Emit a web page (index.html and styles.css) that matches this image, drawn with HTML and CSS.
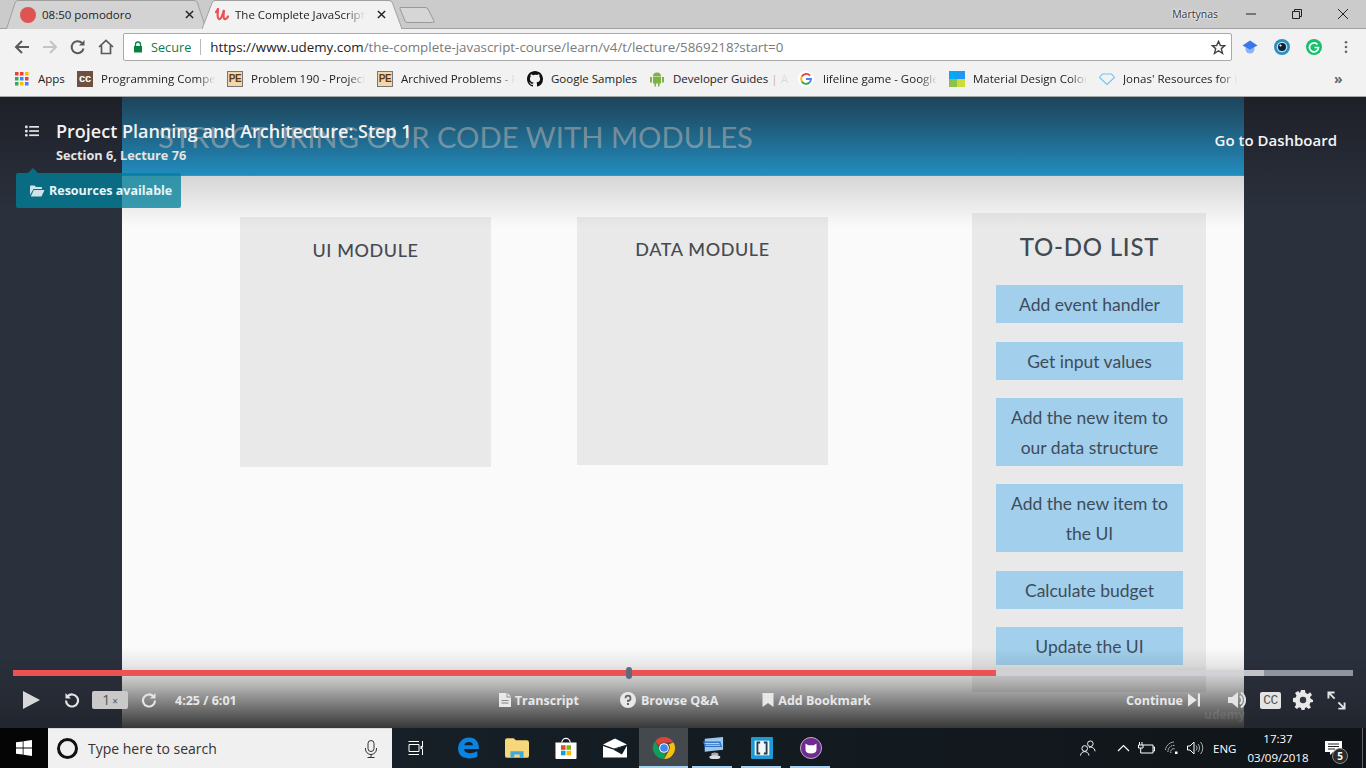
FILE: index.html
```html
<!DOCTYPE html>
<html lang="en">
<head>
<meta charset="utf-8">
<title>The Complete JavaScript Course</title>
<link rel="stylesheet" href="styles.css">
</head>
<body>
<div class="screen">
  <header class="chrome">
    <div class="tabstrip">
      <div class="tab tab-bg">
        <svg class="tab-shape" viewBox="0 0 200 29" preserveAspectRatio="none"><path d="M0.5 29 L9 3 Q9.8 0.5 12 0.5 H188 Q190.5 0.5 191.5 3 L200 29" fill="#d3d3d3" stroke="#a0a0a0"/></svg>
        <span class="fav-dot"></span>
        <span class="tab-title">08:50 pomodoro</span>
        <svg class="tab-x" viewBox="0 0 10 10"><path d="M1 1L9 9M9 1L1 9" stroke="#222" stroke-width="1.6"/></svg>
      </div>
      <div class="tab tab-on">
        <svg class="tab-shape" viewBox="0 0 200 29" preserveAspectRatio="none"><path d="M0 29 L10 3 Q11 0.5 13 0.5 H187 Q189.5 0.5 190.5 3 L200 29" fill="#f2f2f2" stroke="#a0a0a0"/></svg>
        <svg class="fav-u" viewBox="0 0 14 13"><path d="M1 4L3 1M3 1C3 5 1.5 10 4 11C6.5 12 7.5 6 9 2C8.5 6 8 10 9.5 11C10.5 11.5 12 10.5 13 8.500" fill="none" stroke="#ec5252" stroke-width="2.200" stroke-linecap="round"/></svg>
        <span class="tab-title tab-fade">The Complete JavaScript Course</span>
        <svg class="tab-x" viewBox="0 0 10 10"><path d="M1 1L9 9M9 1L1 9" stroke="#222" stroke-width="1.6"/></svg>
      </div>
      <svg class="newtab" viewBox="0 0 36 18"><path d="M1 1.500H26Q28 1.500 29 3L35 15Q35.500 16.500 33.500 16.500H8Q6.500 16.500 6 15L1 2.500Q0.800 1.500 1 1.500Z" fill="#d6d6d6" stroke="#999"/></svg>
      <div class="winctl">
        <span class="user">Martynas</span>
        <svg class="win-ic min" viewBox="0 0 12 12"><path d="M1 6H11" stroke="#222" stroke-width="1"/></svg>
        <svg class="win-ic res" viewBox="0 0 12 12"><path d="M1.500 3.500H8.500V10.500H1.500ZM3.500 3.500V1.500H10.500V8.500H8.500" fill="none" stroke="#222"/></svg>
        <svg class="win-ic cls" viewBox="0 0 12 12"><path d="M1 1L11 11M11 1L1 11" stroke="#222"/></svg>
      </div>
    </div>
    <div class="toolbar">
      <svg class="nav" viewBox="0 0 16 16"><path d="M15 8H2M8 2L2 8L8 14" fill="none" stroke="#5a5a5a" stroke-width="2"/></svg>
      <svg class="nav" viewBox="0 0 16 16"><path d="M1 8H14M8 2L14 8L8 14" fill="none" stroke="#c4c4c4" stroke-width="2"/></svg>
      <svg class="nav" viewBox="0 0 16 16"><path d="M13.500 9.500A6 6 0 1 1 12 4" fill="none" stroke="#5a5a5a" stroke-width="2"/><path d="M14.500 1V6.500H9Z" fill="#5a5a5a"/></svg>
      <svg class="nav" viewBox="0 0 16 16"><path d="M1 8L8 1.500L15 8M3.500 6.500V14.500H12.500V6.500" fill="none" stroke="#5a5a5a" stroke-width="1.700"/></svg>
      <div class="omnibox">
        <svg class="lock" viewBox="0 0 10 12"><path d="M2.500 5V3.500A2.500 2.500 0 0 1 7.500 3.500V5" fill="none" stroke="#0b8043" stroke-width="1.300"/><rect x="1" y="5" width="8" height="6.500" fill="#0b8043"/></svg>
        <span class="secure">Secure</span>
        <span class="omni-div"></span>
        <span class="url"><span class="url-host">https://www.udemy.com</span>/the-complete-javascript-course/learn/v4/t/lecture/5869218?start=0</span>
        <svg class="star" viewBox="0 0 16 16"><path d="M8 1.500L10 6H14.800L11 9.200L12.300 14.300L8 11.500L3.700 14.300L5 9.200L1.200 6H6Z" fill="none" stroke="#444" stroke-width="1.500"/></svg>
      </div>
      <svg class="ext ext-1" viewBox="0 0 16 16"><circle cx="8" cy="10" r="4.500" fill="#8ab4f8"/><path d="M8 1.500L15.500 6.500L8 10.500L0.500 6.500Z" fill="#3b78e7"/></svg>
      <svg class="ext" viewBox="0 0 16 16"><circle cx="8" cy="8" r="8" fill="#2b8fc2"/><circle cx="8" cy="8" r="5.300" fill="#bfe3f2"/><circle cx="8" cy="8" r="4" fill="#0d2233"/><circle cx="6.500" cy="6.500" r="1.100" fill="#fff"/></svg>
      <svg class="ext" viewBox="0 0 16 16"><circle cx="8" cy="8" r="8" fill="#15c26b"/><path d="M11.500 5.500A4.500 4.500 0 1 0 12.500 8.500H8.500" fill="none" stroke="#fff" stroke-width="1.700"/></svg>
      <svg class="dots" viewBox="0 0 4 16"><circle cx="2" cy="2.500" r="1.500" fill="#666"/><circle cx="2" cy="8" r="1.500" fill="#666"/><circle cx="2" cy="13.500" r="1.500" fill="#666"/></svg>
    </div>
    <nav class="bookmarks">
      <div class="bm bm-apps">
        <svg class="bm-ic" viewBox="0 0 14 14"><g><rect x="0" y="0" width="3.500" height="3.500" fill="#ea4335"/><rect x="5" y="0" width="3.500" height="3.500" fill="#ea4335"/><rect x="10" y="0" width="3.500" height="3.500" fill="#fbbc05"/><rect x="0" y="5" width="3.500" height="3.500" fill="#34a853"/><rect x="5" y="5" width="3.500" height="3.500" fill="#4285f4"/><rect x="10" y="5" width="3.500" height="3.500" fill="#ea4335"/><rect x="0" y="10" width="3.500" height="3.500" fill="#34a853"/><rect x="5" y="10" width="3.500" height="3.500" fill="#fbbc05"/><rect x="10" y="10" width="3.500" height="3.500" fill="#4285f4"/></g></svg>
        <span>Apps</span>
      </div>
      <div class="bm"><span class="badge-cc">cc</span><span class="bm-t">Programming Competitions</span></div>
      <div class="bm"><span class="badge-pe">PE</span><span class="bm-t">Problem 190 - Project Euler</span></div>
      <div class="bm"><span class="badge-pe">PE</span><span class="bm-t">Archived Problems - Project</span></div>
      <div class="bm bm-gh">
        <svg class="bm-ic" viewBox="0 0 16 16"><path d="M8 0C3.580 0 0 3.580 0 8c0 3.540 2.290 6.530 5.470 7.590.4.070.55-.17.55-.38v-1.340c-2.230.48-2.700-1.070-2.700-1.070-.36-.92-.89-1.170-.89-1.170-.73-.5.050-.49.050-.49.800.060 1.230.830 1.230.830.710 1.220 1.870.870 2.330.660.070-.520.280-.870.510-1.070-1.780-.2-3.640-.890-3.640-3.950 0-.870.310-1.590.820-2.150-.080-.2-.360-1.020.080-2.120 0 0 .670-.210 2.200.820A7.600 7.600 0 0 1 8 3.850c.680 0 1.360.090 2 .270 1.530-1.040 2.200-.820 2.200-.820.440 1.100.160 1.920.080 2.120.510.560.820 1.270.820 2.150 0 3.070-1.870 3.750-3.650 3.950.290.250.540.730.540 1.480v2.200c0 .210.150.460.550.380A8 8 0 0 0 16 8c0-4.420-3.580-8-8-8z" fill="#111"/></svg>
        <span>Google Samples</span>
      </div>
      <div class="bm bm-an">
        <svg class="bm-ic" viewBox="0 0 16 16"><path d="M4 5.500A4 4 0 0 1 12 5.500ZM4 6H12V12.500H10.500V15.500H9V12.500H7V15.500H5.500V12.500H4ZM1 6H3V11.500H1ZM13 6H15V11.500H13Z" fill="#7cb342"/></svg>
        <span>Developer Guides <span class="bm-sep">|</span> <span class="bm-fadeend">A</span></span>
      </div>
      <div class="bm bm-g">
        <svg class="bm-ic" viewBox="0 0 16 16"><circle cx="8" cy="8" r="8" fill="#fff"/><path d="M12 4.700A5 5 0 0 0 3.800 5.500" fill="none" stroke="#ea4335" stroke-width="1.900"/><path d="M3.800 5.500A5 5 0 0 0 3.800 10.500" fill="none" stroke="#fbbc05" stroke-width="1.900"/><path d="M3.800 10.500A5 5 0 0 0 11.500 11.500" fill="none" stroke="#34a853" stroke-width="1.900"/><path d="M8 8H13A5 5 0 0 1 11.500 11.500" fill="none" stroke="#4285f4" stroke-width="1.900"/></svg>
        <span class="bm-t">lifeline game - Google Search</span>
      </div>
      <div class="bm">
        <svg class="bm-ic" viewBox="0 0 16 16"><rect width="8" height="8" fill="#03a9f4"/><rect x="8" width="8" height="8" fill="#2196f3"/><rect y="8" width="8" height="8" fill="#8bc34a"/><rect x="8" y="8" width="8" height="8" fill="#cddc39"/></svg>
        <span class="bm-t">Material Design Colors</span>
      </div>
      <div class="bm">
        <svg class="bm-ic" viewBox="0 0 16 16"><path d="M3.500 3H12.500L15.500 6.500L8 13.500L0.500 6.500Z" fill="none" stroke="#6fc3ec" stroke-width="1.100"/></svg>
        <span class="bm-t">Jonas' Resources for Everyone</span>
      </div>
      <span class="bm-more">»</span>
    </nav>
  </header>

  <main class="player">
    <section class="slide">
      <div class="slide-bar"><h2 class="slide-title">STRUCTURING OUR CODE WITH MODULES</h2></div>
      <div class="slide-body">
        <div class="module"><h3 class="module-name">UI MODULE</h3></div>
        <div class="module module-data"><h3 class="module-name">DATA MODULE</h3></div>
        <div class="todo">
          <h3 class="todo-title">TO-DO LIST</h3>
          <div class="todo-item">Add event handler</div>
          <div class="todo-item">Get input values</div>
          <div class="todo-item">Add the new item to our data structure</div>
          <div class="todo-item">Add the new item to the UI</div>
          <div class="todo-item">Calculate budget</div>
          <div class="todo-item">Update the UI</div>
        </div>
      </div>
    </section>

    <div class="lecture-head">
      <svg class="list-ic" viewBox="0 0 14 12"><g fill="#e4e4e4"><rect x="0" y="0.500" width="2.700" height="2.700" rx="1"/><rect x="0" y="4.700" width="2.700" height="2.700" rx="1"/><rect x="0" y="8.900" width="2.700" height="2.700" rx="1"/><rect x="4.200" y="1" width="9.800" height="1.700"/><rect x="4.200" y="5.200" width="9.800" height="1.700"/><rect x="4.200" y="9.400" width="9.800" height="1.700"/></g></svg>
      <div>
        <div class="lecture-title">Project Planning and Architecture: Step 1</div>
        <div class="lecture-sub">Section 6, Lecture 76</div>
      </div>
    </div>
    <a class="resources">
      <svg class="folder" viewBox="0 0 15 12"><path d="M0 10V1.500Q0 .500 1 .500H4.500L6 2H11Q12 2 12 3V4H3.500L0 10ZM3.800 5H14.500L11.500 11.500H.8Z" fill="#cfe3e8"/></svg>
      Resources available
    </a>
    <a class="dashboard">Go to Dashboard</a>
    <span class="watermark">udemy</span>

    <div class="controls">
      <div class="progress">
        <div class="prog-buffer"></div>
        <div class="prog-played"></div>
        <div class="prog-handle"></div>
      </div>
      <div class="ctl-row">
        <div class="ctl-left">
          <svg class="play" viewBox="0 0 17 18"><path d="M0 0L17 9L0 18Z" fill="#d8d8d8"/></svg>
          <svg class="seek" viewBox="0 0 16 16"><path d="M3.500 4.500A6 6 0 1 1 2 8.500" fill="none" stroke="#e4e4e4" stroke-width="2.200"/><path d="M1.500 1V6.500H7Z" fill="#e4e4e4"/></svg>
          <span class="speed">1<small class="speed-x">×</small></span>
          <svg class="seek" viewBox="0 0 16 16"><path d="M12.500 4.500A6 6 0 1 0 14 8.500" fill="none" stroke="#e4e4e4" stroke-width="2.200"/><path d="M14.500 1V6.500H9Z" fill="#e4e4e4"/></svg>
          <span class="time">4:25 / 6:01</span>
        </div>
        <div class="ctl-center">
          <span class="ctl-link">
            <svg class="ctl-ic" viewBox="0 0 12 14"><path d="M0 0H7.500V4.500H12V14H0ZM8.500 0L12 3.500H8.500ZM2.500 7H9.500V8H2.500ZM2.500 9.500H9.500V10.500H2.500Z" fill-rule="evenodd" fill="#e8e8e8"/></svg>Transcript</span>
          <span class="ctl-link link-qa">
            <svg class="ctl-ic ic-q" viewBox="0 0 16 16"><circle cx="8" cy="8" r="8" fill="#e8e8e8"/><path d="M5.500 6.200A2.500 2.500 0 1 1 8 8.700V10" fill="none" stroke="#666" stroke-width="1.800"/><rect x="7" y="11" width="2" height="2" fill="#666"/></svg>Browse Q&amp;A</span>
          <span class="ctl-link link-bk">
            <svg class="ctl-ic" viewBox="0 0 11 14"><path d="M0 0H11V14L5.500 10L0 14Z" fill="#e8e8e8"/></svg>Add Bookmark</span>
        </div>
        <div class="ctl-right">
          <span class="ctl-link link-cont">Continue
            <svg class="ctl-ic" viewBox="0 0 11 12"><path d="M0 0L8 6L0 12ZM9 0H11V12H9Z" fill="#e8e8e8"/></svg></span>
          <svg class="vol" viewBox="0 0 20 18"><path d="M0 6H4L10 1V17L4 12H0Z" fill="#e4e4e4"/><path d="M12 5A5 5 0 0 1 12 13M13 1.500A9 9 0 0 1 13 16.500" fill="none" stroke="#e4e4e4" stroke-width="2"/></svg>
          <span class="cc">CC</span>
          <svg class="gear" viewBox="0 0 20 20"><path d="M8 0H12L12.500 3L14.800 4L17.200 2.300L19 5L17 7L17.500 8.500L20 10V12L17.300 12.500L16.500 15L18 17.500L15.500 19L13.500 17.300L12 18L11.500 20H8.500L8 18L6 17.300L4 19L1.500 17L3 15L2.500 12.500L0 12V8L2.800 7.500L3.500 5.500L2 3L5 1L7 3Z" fill="#e8e8e8"/><circle cx="10" cy="10" r="3.200" fill="#33373f"/></svg>
          <svg class="expand" viewBox="0 0 20 20"><path d="M1.500 8V1.500H8M2 2L8 8M18.500 12V18.500H12M18 18L12 12" fill="none" stroke="#e4e4e4" stroke-width="2"/></svg>
        </div>
      </div>
    </div>
  </main>

  <footer class="taskbar">
    <div class="start"><svg class="win-logo" viewBox="0 0 16 16"><path d="M0 2.300L6.700 1.400V7.600H0ZM7.500 1.200L16 0V7.600H7.500ZM0 8.400H6.700V14.600L0 13.700ZM7.500 8.400H16V16L7.500 14.800Z" fill="#fff"/></svg></div>
    <div class="search">
      <span class="cortana"></span>
      <span class="search-text">Type here to search</span>
      <svg class="mic" viewBox="0 0 12 18"><rect x="3" y="0.500" width="6" height="11" rx="3" fill="none" stroke="#333"/><path d="M0.500 8V9A5.500 5.500 0 0 0 11.500 9V8M6 14.500V17M2.500 17.500H9.500" fill="none" stroke="#333"/></svg>
    </div>
    <div class="task-icons">
      <div class="ti ti-view"><svg class="ti-ic ic-view" viewBox="0 0 16 14"><path d="M0.500 0.500H11M0.500 13.500H11M1 3.500H11V10.500H1ZM14.500 0V6M14.500 8V14" fill="none" stroke="#fff"/><rect x="12.500" y="5" width="2" height="3" fill="#fff"/></svg></div>
      <div class="ti"><svg class="ti-ic" viewBox="0 0 20 20"><path d="M1 11C1 4 6 0.500 11 0.500C16.500 0.500 20 4 20 11H6.500C6.500 15 12.500 16 18.500 13V18C12 21 1 20 1 11ZM6.500 7.500H14.500C14.500 3.500 7.500 3.500 6.500 7.500Z" fill="#0a84e0" fill-rule="evenodd"/></svg></div>
      <div class="ti"><svg class="ti-ic" viewBox="0 0 22 18"><path d="M0 2Q0 0 2 0H8L10 2H20Q22 2 22 4V16Q22 18 20 18H2Q0 18 0 16Z" fill="#f6d77a"/><path d="M5 12H17V18H13.500V15H8.500V18H5Z" fill="#3fa9e0"/></svg></div>
      <div class="ti"><svg class="ti-ic" viewBox="0 0 23 24"><path d="M7 6A4.500 4.500 0 0 1 16 6" fill="none" stroke="#fff" stroke-width="1.300"/><path d="M0 6H23V23Q23 24 22 24H1Q0 24 0 23Z" fill="#fff"/><rect x="6" y="9" width="5" height="5" fill="#e8491d"/><rect x="12" y="9" width="5" height="5" fill="#7cb518"/><rect x="6" y="15" width="5" height="5" fill="#00a4ef"/><rect x="12" y="15" width="5" height="5" fill="#ffb900"/></svg></div>
      <div class="ti"><svg class="ti-ic" viewBox="0 0 24 19"><path d="M0 6L12 0L24 6L11 10Z" fill="#fff"/><path d="M0 7.500L10 11L24 7.500V19H0Z" fill="#fff"/><path d="M10 11L24 7L19 16Z" fill="#111a20"/></svg></div>
      <div class="ti ti-on"><svg class="ti-ic" viewBox="0 0 24 24"><path d="M12 0A12 12 0 0 1 22.400 6H12A6 6 0 0 0 6.500 9.500L2.500 4.500A12 12 0 0 1 12 0Z" fill="#db4437"/><path d="M22.400 6A12 12 0 0 1 12 24L17.200 15A6 6 0 0 0 17.200 8Z" fill="#f4c20d"/><path d="M12 24A12 12 0 0 1 2.500 4.500L7 13A6 6 0 0 0 14 17.500Z" fill="#0f9d58"/><circle cx="12" cy="12" r="5.300" fill="#fff"/><circle cx="12" cy="12" r="4.200" fill="#4285f4"/></svg></div>
      <div class="ti ti-open"><svg class="ti-ic" viewBox="0 0 24 24"><path d="M3 2L23 0V14L3 16Z" fill="#9cc9ee"/><path d="M1 5H20L22 11H3Z" fill="#2f6fc4"/><path d="M3 7H19M4 9H20" stroke="#cfe6fa"/><ellipse cx="14" cy="19" rx="4" ry="2" fill="#aaa"/><ellipse cx="14" cy="22" rx="6" ry="2" fill="#ddd"/></svg></div>
      <div class="ti ti-open"><svg class="ti-ic" viewBox="0 0 24 24"><rect width="24" height="24" rx="1" fill="#1c9ad6"/><rect x="4" y="4" width="16" height="16" fill="#f2f6f8"/><path d="M10 5H6V19H10V17H8V7H10ZM14 5H18V19H14V17H16V7H14Z" fill="#273a47"/></svg></div>
      <div class="ti ti-open"><svg class="ti-ic" viewBox="0 0 24 24"><circle cx="12" cy="12" r="11.500" fill="#6f2b90" stroke="#c9b6d6"/><path d="M6 7L9 9H15L18 7V14Q18 18 12 18Q6 18 6 14Z" fill="#fff"/></svg></div>
    </div>
    <div class="tray">
      <svg class="tray-ic tr-people" viewBox="0 0 17 17"><circle cx="11" cy="4" r="3" fill="none" stroke="#fff"/><circle cx="5" cy="9" r="3" fill="none" stroke="#fff"/><path d="M0.500 16.500C1 11 9 11 9.500 16.500M9.500 8C12 7 15.500 8 16 12" fill="none" stroke="#fff"/></svg>
      <svg class="tray-ic tr-chev" viewBox="0 0 13 8"><path d="M1 7L6.500 1.500L12 7" fill="none" stroke="#fff" stroke-width="1.200"/></svg>
      <svg class="tray-ic tr-batt" viewBox="0 0 17 12"><path d="M5 3H15V11H5M15 5H16.500V9H15" fill="none" stroke="#fff"/><path d="M1.500 0V3M4 0V3M0.500 3H5V6H0.500ZM2.700 6V11H5" fill="none" stroke="#fff"/></svg>
      <svg class="tray-ic tr-wifi" viewBox="0 0 14 14"><path d="M0.500 9A9 9 0 0 1 9 1M3 11A6 6 0 0 1 10 4.500M6 12A3 3 0 0 1 10 8" fill="none" stroke="#ddd" stroke-dasharray="1.500 .7"/><rect x="10" y="10.500" width="2.500" height="2.500" fill="#fff"/></svg>
      <svg class="tray-ic tr-vol" viewBox="0 0 17 14"><path d="M0.500 5H3L7 1V13L3 9H0.500Z" fill="none" stroke="#fff"/><path d="M9 4.500A3.500 3.500 0 0 1 9 9.500M11 3A6 6 0 0 1 11 11M13.500 1A9 9 0 0 1 13.500 13" fill="none" stroke="#aaa"/></svg>
      <span class="eng">ENG</span>
      <div class="clock"><span>17:37</span><span>03/09/2018</span></div>
      <div class="notify">
        <svg class="note-ic" viewBox="0 0 17 14"><path d="M0 0H17V11H8L5 14V11H0Z" fill="#fff"/><path d="M3 3H14M3 5.500H14M3 8H10" stroke="#222"/></svg>
        <span class="note-badge">5</span>
      </div>
      <span class="showdesk"></span>
    </div>
  </footer>
</div>
</body>
</html>
```

FILE: styles.css
```css
* { box-sizing: border-box; }
html, body { margin: 0; padding: 0; }
body { width: 1366px; height: 768px; overflow: hidden; font-family: "Open Sans", "Noto Sans", sans-serif; }
.screen { width: 1366px; height: 768px; display: flex; flex-direction: column; }

/* browser chrome */
.chrome { height: 97px; flex: none; display: flex; flex-direction: column; background: #f2f2f2; border-bottom: 1px solid #a8a8a8; font-size: 12px; color: #222; }
.tabstrip { height: 29px; flex: none; background: #cbcbcb; border-bottom: 1px solid #a0a0a0; display: flex; align-items: flex-start; padding-left: 6px; position: relative; }
.tab { position: relative; height: 29px; display: flex; align-items: center; flex: none; }
.tab-bg { width: 200px; padding-left: 14px; }
.tab-on { width: 200px; margin-left: -4px; padding-left: 13px; }
.tab-shape { position: absolute; left: 0; top: 0; width: 100%; height: 29px; }
.tab > *:not(.tab-shape) { position: relative; }
.fav-dot { width: 16px; height: 16px; border-radius: 50%; background: #e05353; margin-right: 6px; flex: none; }
.fav-u { width: 14px; height: 13px; margin-right: 6px; flex: none; }
.tab-title { font-family: "Open Sans", sans-serif; font-size: 11.5px; white-space: nowrap; overflow: hidden; width: 130px; flex: none; }
.tab-bg .tab-title { width: 137px; }
.tab-fade { -webkit-mask-image: linear-gradient(90deg, #000 85%, transparent 100%); mask-image: linear-gradient(90deg, #000 85%, transparent 100%); }
.tab-x { width: 9px; height: 9px; margin-left: 12px; flex: none; }
.tab-bg .tab-x { margin-left: 6px; }
.newtab { width: 36px; height: 18px; margin: 6px 0 0 -3px; flex: none; }
.winctl { margin-left: auto; height: 28px; display: flex; align-items: center; }
.user { font-size: 10.5px; color: #333; text-shadow: 0 0 3px #fff, 0 0 2px #fff; margin-right: 27px; }
.win-ic { width: 12px; height: 12px; flex: none; }
.min { margin-right: 34px; }
.res { margin-right: 34px; }
.cls { margin-right: 17px; }

.toolbar { height: 36px; flex: none; display: flex; align-items: center; padding-left: 14px; }
.nav { width: 16px; height: 16px; margin-right: 12px; flex: none; }
.omnibox { width: 1109px; height: 28px; margin: 0 8px 0 -3px; background: #fff; border: 1px solid #a9a9a9; border-radius: 2px; display: flex; align-items: center; padding-left: 9px; flex: none; }
.lock { width: 10px; height: 12px; flex: none; }
.secure { color: #0b8043; font-size: 12.7px; margin-left: 8px; }
.omni-div { width: 1px; height: 16px; background: #bbb; margin: 0 9px 0 9px; }
.url { font-size: 13.36px; color: #7a7a7a; white-space: nowrap; letter-spacing: 0; }
.url-host { color: #222; }
.star { width: 15px; height: 15px; margin-left: auto; margin-right: 5px; flex: none; }
.ext { width: 16px; height: 16px; margin-left: 16px; flex: none; }
.ext-1 { margin-left: 2px; }
.dots { width: 4px; height: 14px; margin-left: 22px; flex: none; }

.bookmarks { height: 31px; flex: none; display: flex; align-items: center; padding: 0 0 4px 15px; font-size: 11.5px; position: relative; }
.bm { width: 150px; display: flex; align-items: center; gap: 8px; flex: none; white-space: nowrap; }
.bm-apps { width: 62px; gap: 9px; }
.bm-apps .bm-ic { width: 14px; height: 14px; }
.bm-gh { width: 122px; }
.bm-an { width: 151px; overflow: hidden; }
.bm-g { width: 149px; margin-left: -2px; gap: 9px; }
.bm-g + .bm { margin-left: 2px; }
.bm-ic { width: 16px; height: 16px; flex: none; }
.bm-t { width: 114px; overflow: hidden; -webkit-mask-image: linear-gradient(90deg, #000 85%, transparent 100%); mask-image: linear-gradient(90deg, #000 85%, transparent 100%); }
.bm-sep { color: #d2b48c; }
.bm-fadeend { color: #ddd; }
.badge-cc { width: 16px; height: 16px; background: #6d5140; color: #fff; font: 700 11px/14px "Liberation Sans", sans-serif; text-align: center; flex: none; }
.badge-pe { width: 16px; height: 16px; background: #f5d6a8; border: 1px solid #777; color: #5a3a1a; font: 700 10px/14px "Liberation Sans", sans-serif; text-align: center; flex: none; letter-spacing: -.5px; }
.bm-more { margin-left: 85px; color: #666; font-size: 14px; font-weight: 700; }

/* player */
.player { height: 631px; flex: none; position: relative; overflow: hidden; background: linear-gradient(#1e2028 0, #2a303c 110px, #2a303c 560px, #22262e 631px); color: #fff; }
.slide { width: 1122px; height: 631px; margin-left: 122px; display: flex; flex-direction: column; background: #fafafa; position: relative; overflow: hidden; }
.slide::before { content: ""; position: absolute; left: 0; right: 0; top: 0; height: 130px; background: linear-gradient(rgba(0,0,0,.3), rgba(0,0,0,.14) 62%, rgba(0,0,0,0)); }
.slide::after { content: ""; position: absolute; left: 0; right: 0; bottom: 0; height: 80px; background: linear-gradient(rgba(0,0,0,0), rgba(0,0,0,.08) 22%, rgba(0,0,0,.26) 45%, rgba(0,0,0,.5) 70%, rgba(0,0,0,.78) 100%); }
.slide-bar { height: 79px; flex: none; background: linear-gradient(#2a6180, #28a5e0); padding: 22px 0 0 36px; border-bottom: 1px solid #4aa8d8; }
.slide-title { margin: 0; font: 400 29.2px/36px Lato, sans-serif; color: rgba(220,220,220,.62); white-space: nowrap; }
.slide-body { display: flex; align-items: flex-start; padding: 41px 0 0 118px; color: #3e4854; font-family: Lato, sans-serif; }
.module { width: 251px; height: 250px; background: #e9e9e9; flex: none; padding-top: 20px; text-align: center; }
.module-data { height: 248px; margin-left: 86px; padding-top: 19px; }
.module-name { margin: 0; font: 500 18px/26px Lato, sans-serif; letter-spacing: .6px; color: #454b52; }
.todo { width: 234px; height: 479px; margin: -4px 0 0 144px; background: #e9e9e9; flex: none; padding: 14px 23px 0 24px; display: flex; flex-direction: column; gap: 18.4px; text-align: center; }
.todo-title { margin: 0 0 -18.2px; font: 500 24px/40px Lato, sans-serif; letter-spacing: .8px; color: #414951; height: 58px; }
.todo-item { background: #a2cfec; font-size: 17.5px; line-height: 30px; padding: 5px 6px 3px; color: #3e4c5a; }

.lecture-head { position: absolute; left: 25px; top: 23px; display: flex; gap: 17px; align-items: flex-start; }
.list-ic { width: 14px; height: 12px; margin-top: 5px; flex: none; }
.lecture-title { font-size: 18px; line-height: 22px; font-weight: 600; color: #f2f2f2; white-space: nowrap; }
.lecture-sub { font-size: 12.7px; line-height: 18px; font-weight: 700; color: #e4e4e4; margin-top: 4px; white-space: nowrap; }
.resources { position: absolute; left: 16px; top: 76px; width: 165px; height: 35px; background: rgba(0,127,153,.77); border-radius: 2px; font-size: 12.5px; font-weight: 700; color: #eaf4f6; display: flex; align-items: center; padding-left: 14px; gap: 4px; white-space: nowrap; }
.resources::before { content: ""; position: absolute; left: 12px; top: -5px; border: 5px solid transparent; border-top: 0; border-bottom-color: rgba(0,127,153,.77); }
.folder { width: 15px; height: 12px; flex: none; }
.dashboard { position: absolute; right: 29px; top: 33px; font-size: 15px; line-height: 20px; font-weight: 600; color: #f4f4f4; white-space: nowrap; }
.watermark { position: absolute; left: 1204px; top: 611px; font-size: 12px; line-height: 14px; font-weight: 700; color: rgba(255,255,255,.1); }

.controls { position: absolute; left: 13px; right: 13px; bottom: 17px; }
.progress { height: 6px; position: relative; background: rgba(190,192,200,.7); margin-bottom: 13px; }
.prog-buffer { position: absolute; left: 0; top: 0; bottom: 0; width: 1251px; background: rgba(215,215,218,.7); }
.prog-played { position: absolute; left: 0; top: 0; bottom: 0; width: 983px; background: #ec5252; }
.prog-handle { position: absolute; left: 613px; top: -3px; width: 6px; height: 12px; border-radius: 3px; background: #5f6b7a; }
.ctl-row { height: 22px; display: flex; align-items: center; justify-content: space-between; padding: 0 7px 0 10px; font-size: 12.5px; font-weight: 700; color: #e8e8e8; white-space: nowrap; }
.ctl-left, .ctl-center, .ctl-right { display: flex; align-items: center; }
.ctl-center { margin-left: 7px; }
.play { width: 17px; height: 18px; flex: none; }
.seek { width: 16px; height: 16px; flex: none; margin-left: 24px; }
.speed { width: 36px; height: 18px; margin-left: 12px; background: #c9c9c9; border-radius: 2px; color: #555; font-size: 14px; font-weight: 400; line-height: 18px; text-align: center; }
.speed-x { font-size: 10px; margin-left: 2px; }
.speed + .seek { margin-left: 13px; }
.time { margin-left: 18px; }
.ctl-link { display: flex; align-items: center; gap: 4px; }
.ctl-ic { width: 12px; height: 14px; flex: none; }
.ic-q { width: 16px; height: 16px; }
.link-qa { margin-left: 41px; gap: 5px; }
.link-bk { margin-left: 44px; }
.link-cont { gap: 5px; }
.vol { width: 20px; height: 18px; margin-left: 28px; flex: none; }
.cc { width: 21px; height: 17px; margin-left: 12px; background: #e4e4e4; color: #555; border-radius: 2px; font: 400 13px/17px "Liberation Mono", monospace; letter-spacing: -.5px; text-align: center; }
.gear { width: 20px; height: 20px; margin-left: 12px; flex: none; }
.expand { width: 19px; height: 19px; margin-left: 14px; flex: none; }

/* taskbar */
.taskbar { height: 40px; flex: none; display: flex; background: linear-gradient(90deg, #1a252e, #141c22 50%, #101418); color: #fff; }
.start { width: 48px; background: #050505; display: flex; align-items: center; justify-content: center; }
.win-logo { width: 16px; height: 16px; }
.search { width: 344px; background: #f0f0f0; border-top: 1px solid #d8d8d8; display: flex; align-items: center; padding-left: 9px; color: #333; }
.cortana { width: 21px; height: 21px; border-radius: 50%; border: 3px solid #111; flex: none; }
.search-text { font-size: 14px; margin-left: 10px; color: #333; }
.mic { width: 12px; height: 18px; margin-left: auto; margin-right: 15px; flex: none; }
.task-icons { display: flex; }
.ti { width: 49px; height: 40px; display: flex; align-items: center; justify-content: center; position: relative; flex: none; }
.ti-view { width: 51px; padding-right: 4px; }
.ti-on { background: #44494e; }
.ti-on::after, .ti-open::after { content: ""; position: absolute; bottom: 0; height: 2px; background: #a6d0f0; }
.ti-on::after { left: 0; right: 0; }
.ti-open::after { left: 4px; right: 5px; }
.ti-ic { width: 24px; height: 22px; }
.ic-view { width: 16px; height: 14px; }
.tray { margin-left: auto; display: flex; align-items: center; height: 40px; }
.tray-ic { flex: none; }
.tr-people { width: 16px; height: 16px; margin-right: 21px; }
.tr-chev { width: 13px; height: 8px; margin-right: 8px; }
.tr-batt { width: 17px; height: 12px; margin-right: 10px; }
.tr-wifi { width: 14px; height: 14px; margin-right: 8px; }
.tr-vol { width: 17px; height: 14px; margin-right: 9px; }
.eng { font-size: 11.5px; width: 35px; }
.clock { width: 60px; display: flex; flex-direction: column; align-items: center; font-size: 11.5px; line-height: 19px; white-space: nowrap; }
.notify { position: relative; width: 17px; height: 14px; margin-left: 17px; }
.note-ic { width: 17px; height: 14px; display: block; }
.note-badge { position: absolute; left: 7px; top: 7px; width: 16px; height: 16px; border-radius: 50%; background: #2a2a2a; border: 1px solid #888; font-size: 10px; line-height: 14px; text-align: center; font-weight: 700; }
.showdesk { width: 1px; height: 40px; background: #666; margin-left: 20px; margin-right: 3px; }
```
